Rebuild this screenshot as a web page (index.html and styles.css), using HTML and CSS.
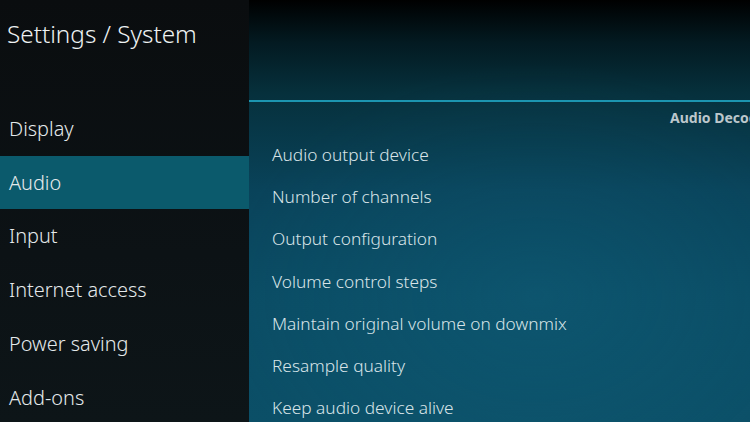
FILE: index.html
```html
<!DOCTYPE html>
<html lang="en">
<head>
<meta charset="utf-8">
<title>Settings / System</title>
<link rel="stylesheet" href="styles.css">
</head>
<body>
<div class="app">
  <aside class="sidebar">
    <div class="title">Settings / System</div>
    <ul class="menu">
      <li class="menu-item">Display</li>
      <li class="menu-item active">Audio</li>
      <li class="menu-item">Input</li>
      <li class="menu-item">Internet access</li>
      <li class="menu-item">Power saving</li>
      <li class="menu-item">Add-ons</li>
    </ul>
  </aside>
  <main class="main">
    <div class="header"></div>
    <div class="rule"></div>
    <div class="content">
      <div class="group">Audio Decoder</div>
      <ul class="settings">
        <li class="setting">Audio output device</li>
        <li class="setting">Number of channels</li>
        <li class="setting">Output configuration</li>
        <li class="setting">Volume control steps</li>
        <li class="setting">Maintain original volume on downmix</li>
        <li class="setting">Resample quality</li>
        <li class="setting">Keep audio device alive</li>
      </ul>
    </div>
  </main>
</div>
</body>
</html>
```
FILE: styles.css
```css
html, body {
  margin: 0;
  padding: 0;
  background: #000;
}
body {
  font-family: "Noto Sans", "Open Sans", "DejaVu Sans", sans-serif;
  color: #e6eef0;
}
.app {
  display: flex;
  width: 750px;
  height: 422px;
  overflow: hidden;
}
.sidebar {
  width: 249px;
  flex: none;
  background: linear-gradient(180deg, #0a0d0f 0%, #0c1215 60%, #0d1518 100%);
  display: flex;
  flex-direction: column;
  overflow: hidden;
}
.title {
  flex: none;
  height: 102px;
  box-sizing: border-box;
  padding: 17px 0 0 7px;
  font-size: 24.3px;
  font-weight: 300;
  line-height: 34px;
  color: #eef2f3;
  white-space: nowrap;
}
.menu {
  flex: none;
  list-style: none;
  margin: 0;
  padding: 0;
}
.menu-item {
  height: 54px;
  box-sizing: border-box;
  padding: 0 0 0 9px;
  line-height: 53px;
  font-size: 19.9px;
  font-weight: 300;
  color: #e4e9eb;
  white-space: nowrap;
}
.menu-item.active {
  background: #0b5a6c;
  height: 53px;
}
.main {
  flex: 1;
  display: flex;
  flex-direction: column;
  background:
    radial-gradient(ellipse 60% 55% at 55% 70%, rgba(20, 110, 140, 0.25), rgba(20, 110, 140, 0) 100%),
    linear-gradient(180deg, #000000 0%, #031a21 10%, #06303c 22%, #09435a 45%, #0a4c64 70%, #0b4f67 100%);
}
.header {
  height: 100px;
  flex: none;
}
.rule {
  height: 2px;
  flex: none;
  background: #1c95b0;
}
.content {
  flex: 1;
  display: flex;
  flex-direction: column;
  padding-top: 8px;
}
.group {
  padding-left: 421px;
  height: 16px;
  line-height: 16px;
  font-size: 14px;
  font-weight: bold;
  color: #bcc7cc;
  white-space: nowrap;
  overflow: hidden;
}
.settings {
  list-style: none;
  margin: 8px 0 0 0;
  padding: 0;
}
.setting {
  height: 42.2px;
  line-height: 42px;
  padding-left: 23px;
  font-size: 17.3px;
  font-weight: 300;
  color: #d8e4e8;
  white-space: nowrap;
}
```
